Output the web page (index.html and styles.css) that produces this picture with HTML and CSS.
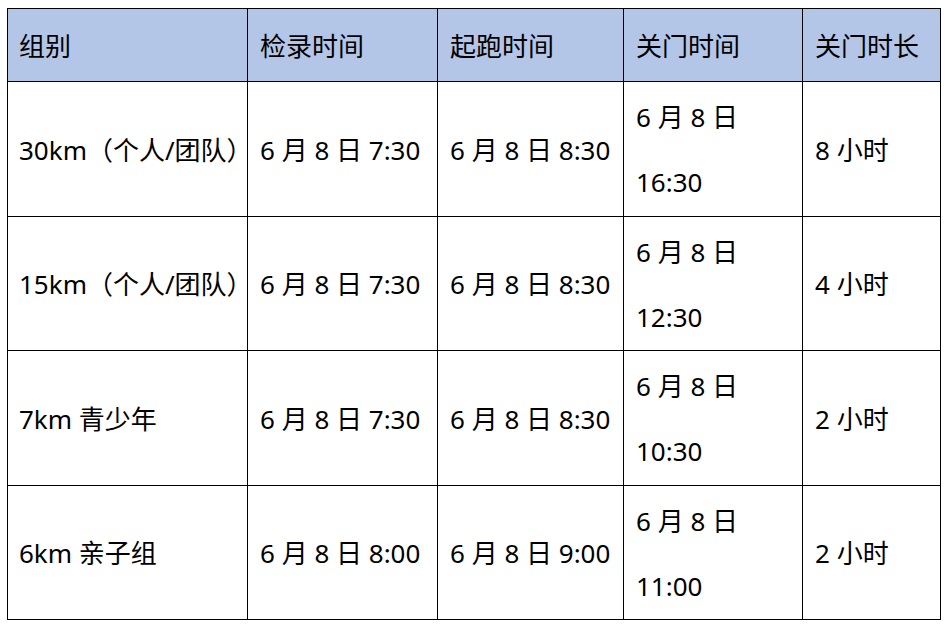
FILE: index.html
```html
<!DOCTYPE html>
<html lang="zh-CN">
<head>
<meta charset="utf-8">
<link rel="stylesheet" href="styles.css">
</head>
<body>
<table class="schedule">
  <colgroup>
    <col class="c1"><col class="c2"><col class="c3"><col class="c4"><col class="c5">
  </colgroup>
  <thead>
    <tr><th>组别</th><th>检录时间</th><th>起跑时间</th><th>关门时间</th><th>关门时长</th></tr>
  </thead>
  <tbody>
    <tr><td>30km（个人/团队）</td><td>6 月 8 日 7:30</td><td>6 月 8 日 8:30</td><td>6 月 8 日<br>16:30</td><td>8 小时</td></tr>
    <tr><td>15km（个人/团队）</td><td>6 月 8 日 7:30</td><td>6 月 8 日 8:30</td><td>6 月 8 日<br>12:30</td><td>4 小时</td></tr>
    <tr><td>7km 青少年</td><td>6 月 8 日 7:30</td><td>6 月 8 日 8:30</td><td>6 月 8 日<br>10:30</td><td>2 小时</td></tr>
    <tr><td>6km 亲子组</td><td>6 月 8 日 8:00</td><td>6 月 8 日 9:00</td><td>6 月 8 日<br>11:00</td><td>2 小时</td></tr>
  </tbody>
</table>
</body>
</html>
```
FILE: styles.css
```css
html, body { background: #ffffff; }
body {
  margin: 8px 0 0 7px;
  font-family: "Noto Sans", "Noto Sans CJK SC", sans-serif;
  color: #000;
}
.schedule {
  border-collapse: collapse;
  table-layout: fixed;
  width: 933px;
  font-size: 26px;
}
.c1 { width: 240px; }
.c2 { width: 190px; }
.c3 { width: 186px; }
.c4 { width: 179px; }
.c5 { width: 138px; }
.schedule th, .schedule td {
  border: 1px solid #000;
  text-align: left;
  vertical-align: middle;
  font-weight: normal;
  line-height: 65px;
  padding: 2px 4px 0 12px;
  white-space: nowrap;
}
.schedule th { background: #b4c6e7; height: 70px; padding-top: 2px; padding-bottom: 0; }
.schedule td { height: 130.5px; padding-top: 3px; padding-bottom: 0; }
.schedule td:first-child, .schedule th:first-child { padding-left: 11px; }
```
